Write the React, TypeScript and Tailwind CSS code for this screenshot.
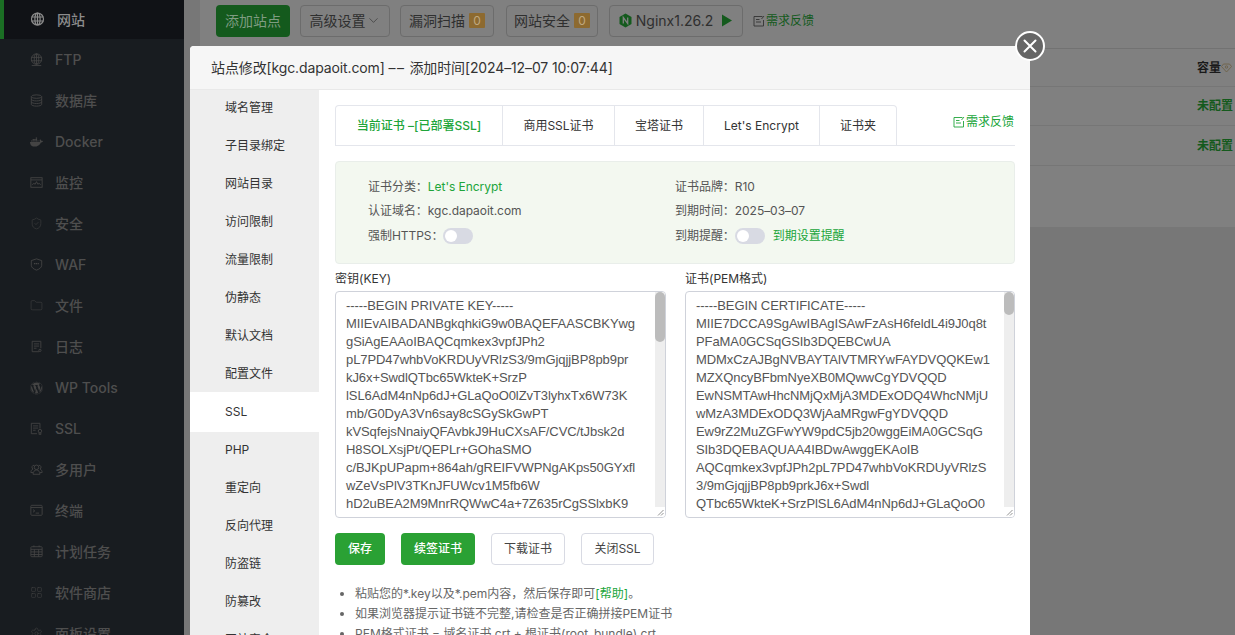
import { ShieldCheck, Folder, LayoutGrid, Settings, ChevronDown } from 'lucide-react'
import { FaWordpress, FaDocker } from 'react-icons/fa'
import type { ReactNode } from 'react'

const FONT = "font-['Inter','Noto_Sans_CJK_SC',sans-serif]"

// ─── Icons ───────────────────────────────────────────────────────────────────

function Svg({ children, sw = 1 }: { children: ReactNode; sw?: number }) {
  return (
    <svg width="15" height="15" viewBox="0 0 15 15" fill="none" stroke="currentColor" strokeWidth={sw}>
      {children}
    </svg>
  )
}

const globePaths = (
  <>
    <circle cx="7.500" cy="7" r="6" />
    <ellipse cx="7.500" cy="7" rx="2.600" ry="6" />
    <path d="M7.500 1v12M1.500 5h12M1.500 9h12" />
  </>
)

function FeedbackIcon() {
  return (
    <svg width="12" height="12" viewBox="0 0 12 12" fill="none" stroke="currentColor" strokeWidth="0.9">
      <path d="M9.500 1.500H1v9.500h9.500V5M3 4.500h3.500M3 7h5M8.500 4 11 1" />
    </svg>
  )
}

// ─── Data ────────────────────────────────────────────────────────────────────

const ic = { size: 15, strokeWidth: 1 }

const SIDE_ITEMS: { label: string; icon: ReactNode }[] = [
  { label: 'FTP', icon: <Svg>{globePaths}<path d="M2 14.500h11" /></Svg> },
  {
    label: '数据库',
    icon: (
      <Svg>
        <ellipse cx="7.500" cy="3" rx="6" ry="2" />
        <path d="M1.500 3v9c0 1.100 2.700 2 6 2s6-.9 6-2V3M1.500 6c0 1.100 2.700 2 6 2s6-.9 6-2M1.500 9c0 1.100 2.700 2 6 2s6-.9 6-2" />
      </Svg>
    ),
  },
  { label: 'Docker', icon: <FaDocker size={14} /> },
  {
    label: '监控',
    icon: (
      <Svg>
        <rect x="1" y="2" width="13" height="11" />
        <path d="M1 4.500h13M2.500 10l2-1.500 1.500 1 1.500-3 1.500 3 1.500-1 2 1.500" />
      </Svg>
    ),
  },
  { label: '安全', icon: <ShieldCheck {...ic} /> },
  {
    label: 'WAF',
    icon: (
      <Svg>
        <path d="M7.500 1 13.500 3v5.500c0 2.500-3 4.500-6 5.500-3-1-6-3-6-5.500V3z" />
        <path d="M4.500 6.500h6" strokeDasharray="1.500 .6" strokeWidth="1.500" />
      </Svg>
    ),
  },
  { label: '文件', icon: <Folder {...ic} /> },
  {
    label: '日志',
    icon: (
      <Svg>
        <path d="M10.500 13.500H2.500V1.500h10v8M4.500 4.500h6M4.500 7h6M4.500 9.500h3" />
        <circle cx="11.500" cy="12" r="1.300" />
      </Svg>
    ),
  },
  { label: 'WP Tools', icon: <FaWordpress size={14} /> },
  {
    label: 'SSL',
    icon: (
      <Svg>
        <path d="M8 13.500H1.500V1.500h10v6M3.500 4.500h6M3.500 7h6M3.500 9.500h3" />
        <circle cx="11.500" cy="10.500" r="2" />
        <path d="M10.500 12.500v2l1-.7 1 .7v-2" />
      </Svg>
    ),
  },
  {
    label: '多用户',
    icon: (
      <Svg>
        <circle cx="7.500" cy="5" r="2.600" />
        <path d="M5 2.700A2.300 2.300 0 0 0 3.500 7M10 2.700A2.300 2.300 0 0 1 11.500 7M3.500 7C2 7.500 1 9 1 11h2.500M11.500 7c1.500.5 2.500 2 2.500 4h-2.500M3.500 13c0-2.500 1.500-5 4-5s4 2.500 4 5z" />
      </Svg>
    ),
  },
  {
    label: '终端',
    icon: (
      <Svg>
        <rect x="1" y="1.500" width="13" height="11.500" rx="1" />
        <path d="M1 4h13M3.500 6.500l2 1.500-2 1.500M6.500 10.500h4" />
      </Svg>
    ),
  },
  {
    label: '计划任务',
    icon: (
      <Svg>
        <rect x="1" y="2" width="13" height="11.500" rx="1" />
        <path d="M4.500 .5v2M10.500 .5v2M1 5h13M1 8h13M1 11h13M5 5v8.500M10 5v8.500" />
      </Svg>
    ),
  },
  { label: '软件商店', icon: <LayoutGrid {...ic} /> },
  { label: '面板设置', icon: <Settings {...ic} /> },
]

const MODAL_NAV = ['域名管理', '子目录绑定', '网站目录', '访问限制', '流量限制', '伪静态', '默认文档', '配置文件', 'SSL', 'PHP', '重定向', '反向代理', '防盗链', '防篡改', '网站安全']

const KEY_LINES = [
  '-----BEGIN PRIVATE KEY-----',
  'MIIEvAIBADANBgkqhkiG9w0BAQEFAASCBKYwg',
  'gSiAgEAAoIBAQCqmkex3vpfJPh2',
  'pL7PD47whbVoKRDUyVRlzS3/9mGjqjjBP8pb9pr',
  'kJ6x+SwdlQTbc65WkteK+SrzP',
  'lSL6AdM4nNp6dJ+GLaQoO0lZvT3lyhxTx6W73K',
  'mb/G0DyA3Vn6say8cSGySkGwPT',
  'kVSqfejsNnaiyQFAvbkJ9HuCXsAF/CVC/tJbsk2d',
  'H8SOLXsjPt/QEPLr+GOhaSMO',
  'c/BJKpUPapm+864ah/gREIFVWPNgAKps50GYxfl',
  'wZeVsPlV3TKnJFUWcv1M5fb6W',
  'hD2uBEA2M9MnrRQWwC4a+7Z635rCgSSlxbK9',
  '3Ha0Hd2M9xhEZcbQwP4u6ZRLdD9',
]

const CERT_LINES = [
  '-----BEGIN CERTIFICATE-----',
  'MIIE7DCCA9SgAwIBAgISAwFzAsH6feldL4i9J0q8t',
  'PFaMA0GCSqGSIb3DQEBCwUA',
  'MDMxCzAJBgNVBAYTAlVTMRYwFAYDVQQKEw1',
  'MZXQncyBFbmNyeXB0MQwwCgYDVQQD',
  'EwNSMTAwHhcNMjQxMjA3MDExODQ4WhcNMjU',
  'wMzA3MDExODQ3WjAaMRgwFgYDVQQD',
  'Ew9rZ2MuZGFwYW9pdC5jb20wggEiMA0GCSqG',
  'SIb3DQEBAQUAA4IBDwAwggEKAoIB',
  'AQCqmkex3vpfJPh2pL7PD47whbVoKRDUyVRlzS',
  '3/9mGjqjjBP8pb9prkJ6x+Swdl',
  'QTbc65WkteK+SrzPlSL6AdM4nNp6dJ+GLaQoO0',
  'lZvT3lyhxTx6W73Kmb/G0DyA3Vn6say',
]

// ─── Sub-components ──────────────────────────────────────────────────────────

function TopButton({ w, children }: { w: string; children: ReactNode }) {
  return (
    <div className={`${w} h-8 flex items-center justify-center gap-1 rounded-[4px] border border-[#6c6c6c] text-[14px] text-[#2f2f2f] whitespace-nowrap`}>
      {children}
    </div>
  )
}

function ZeroTag() {
  return <span className="w-4 h-[15px] flex items-center justify-center bg-[#8d6a30] text-[#bfa77f] text-[12px] rounded-[1px]">0</span>
}

function Toggle() {
  return (
    <span className="inline-flex w-[30px] h-4 rounded-full bg-[#d8dae3] items-center pl-[2px]">
      <span className="w-[12px] h-[12px] rounded-full bg-white" />
    </span>
  )
}

function CodeBox({ lines, thumb }: { lines: string[]; thumb: string }) {
  return (
    <div className="relative h-[227px] rounded-[4px] border border-[#cfd2da] overflow-hidden">
      <div className="pl-[10px] pt-[5px] font-['Liberation_Sans','Noto_Sans_CJK_SC',sans-serif] text-[13px] tracking-[-0.08px] leading-[18px] text-[#555] whitespace-pre">
        {lines.map(l => (
          <div key={l}>{l}</div>
        ))}
      </div>
      <div className="absolute top-0 right-0 bottom-[10px] w-[10px] bg-[#eeeeee]">
        <div className={`w-[10px] rounded-full bg-[#bcbcbc] ${thumb}`} />
      </div>
      <div className="absolute right-0 bottom-0 w-[10px] h-[10px] bg-white">
        <svg width="10" height="10" viewBox="0 0 10 10" stroke="#777" strokeWidth="0.8">
          <path d="M3 8.500 8.500 3M6 8.500 8.500 6" />
        </svg>
      </div>
    </div>
  )
}

function Tab({ w, active, children }: { w: string; active?: boolean; children: ReactNode }) {
  return (
    <div className={`${w} h-[41px] flex items-center justify-center border-t border-r border-[#e4e6ec] first:border-l first:rounded-tl-[4px] last:rounded-tr-[4px] text-[12px] ${active ? 'text-[#20a53a] font-medium' : 'text-[#333] border-b'}`}>
      {children}
    </div>
  )
}

// ─── Main ────────────────────────────────────────────────────────────────────

export default function App() {
  return (
    <div className={`${FONT} relative w-[1235px] h-[635px] overflow-hidden flex bg-[#777777]`}>
      {/* 사이드바 */}
      <aside className="w-[184px] h-full shrink-0 bg-[#181c20] overflow-hidden">
        <div className="h-[39px] flex items-center gap-[12px] pl-[26px] bg-[#101216] border-l-[4px] border-[#1b6f24] text-[#8c8c8c] text-[14px] font-medium">
          <Svg sw={1.200}>{globePaths}</Svg>
          网站
        </div>
        {SIDE_ITEMS.map(it => (
          <div key={it.label} className="h-[41px] flex items-center gap-[12px] pl-[30px] text-[#4e4e4e] text-[14px] font-medium first:mt-px">
            <span className="w-[13px] flex justify-center text-[#444]">{it.icon}</span>
            {it.label}
          </div>
        ))}
      </aside>

      {/* 배경 페이지 */}
      <main className="flex-1 pl-[16px]">
        <div className="bg-[#808080] h-[227px]">
          <div className="h-[49px] pl-[16px] flex items-center border-b border-[#727272]">
            <div className="h-8 w-[74px] mr-[10px] flex items-center justify-center rounded-[4px] bg-[#145a1d] text-[#7f9c82] text-[14px] -mt-[7px]">添加站点</div>
            <div className="flex items-center -mt-[7px]">
              <TopButton w="w-[90px]">
                高级设置
                <ChevronDown size={15} strokeWidth={1} className="-ml-1" />
              </TopButton>
              <div className="w-[10px]" />
              <TopButton w="w-[94px]">
                漏洞扫描
                <ZeroTag />
              </TopButton>
              <div className="w-[12px]" />
              <TopButton w="w-[92px]">
                网站安全
                <ZeroTag />
              </TopButton>
              <div className="w-[11px]" />
              <TopButton w="w-[134px]">
                <svg width="13" height="15" viewBox="0 0 13 15">
                  <path d="M6.500 0.500 12.500 4v7l-6 3.500L0.500 11V4z" fill="#145a1d" />
                  <path d="M4.300 10.500v-6l4.400 6v-6" fill="none" stroke="#808080" strokeWidth="1.300" />
                </svg>
                Nginx1.26.2
                <svg width="12" height="13" viewBox="0 0 12 13" className="ml-1">
                  <path d="M1 0.500 11 6.500 1 12.500z" fill="#145a1d" />
                </svg>
              </TopButton>
              <div className="ml-[10px] flex items-center gap-[1px] text-[12px] text-[#145a1d]">
                <span className="text-[#333]">
                  <FeedbackIcon />
                </span>
                需求反馈
              </div>
            </div>
          </div>
          <div className="pl-[997px] h-[38px] flex items-center text-[12px] font-semibold text-[#1a1a1a] whitespace-nowrap border-b border-[#767676]">
            容量
            <svg width="11" height="10" viewBox="0 0 11 10" fill="none" stroke="#6f6248" strokeWidth="0.9" className="shrink-0">
              <path d="M2.500 1h6l2 2.500L5.500 9 .5 3.500z" />
              <circle cx="5.500" cy="4" r="1.200" />
            </svg>
          </div>
          <div className="pl-[997px] h-[39px] flex items-center text-[12px] font-semibold text-[#145a1d] whitespace-nowrap border-b border-[#767676]">未配置</div>
          <div className="pl-[997px] h-[40px] flex items-center text-[12px] font-semibold text-[#145a1d] whitespace-nowrap border-b border-[#767676]">未配置</div>
        </div>
      </main>

      {/* 모달 */}
      <div className="absolute left-[190px] top-[46px] w-[840px] h-[640px] bg-white rounded-t-[4px] flex flex-col">
        <div className="h-[44px] shrink-0 pl-[21px] flex items-center text-[14px] tracking-[-0.12px] text-[#333] bg-[#f6f6f6] border-b border-[#e9e9e9] rounded-t-[4px] whitespace-pre">
          站点修改[kgc.dapaoit.com] <span className="tracking-[1.500px]">––</span> 添加时间[2024–12–07 10:07:44]
        </div>
        <div className="flex flex-1 min-h-0">
          <nav className="w-[129px] shrink-0 bg-[#eeeeee] overflow-hidden">
            <div className="-mt-px">
              {MODAL_NAV.map(n => (
                <div key={n} className={`pl-[35px] flex items-center text-[12px] text-[#333] ${n === 'SSL' ? 'bg-white h-[40px] -my-px' : 'h-[38px]'}`}>
                  {n}
                </div>
              ))}
            </div>
          </nav>

          <div className="flex-1 pl-[16px] pr-[16px] pt-[15px] text-[12px] text-[#555]">
            {/* 탭 */}
            <div className="flex items-end border-b border-[#e4e6ec] h-[41px] justify-between">
              <div className="flex -mb-px">
                <Tab w="w-[168px]" active>当前证书 –[已部署SSL]</Tab>
                <Tab w="w-[112px]">商用SSL证书</Tab>
                <Tab w="w-[89px]">宝塔证书</Tab>
                <Tab w="w-[116px]">Let's Encrypt</Tab>
                <Tab w="w-[77px]">证书夹</Tab>
              </div>
              <div className="self-start mt-[8px] mr-px flex items-center gap-[1px] text-[#20a53a]">
                <FeedbackIcon />
                需求反馈
              </div>
            </div>

            {/* 인증서 정보 */}
            <div className="mt-[15px] h-[103px] bg-[#f3f8f0] border border-[#e9eeea] rounded-[4px] pl-[32px] pt-[12.500px] grid grid-cols-[307px_1fr] auto-rows-[24.500px] items-center tracking-[-0.04px]">
              <div>证书分类：<span className="text-[#20a53a]">Let's Encrypt</span></div>
              <div>证书品牌：R10</div>
              <div>认证域名：kgc.dapaoit.com</div>
              <div>到期时间：2025–03–07</div>
              <div className="flex items-center">强制HTTPS：<Toggle /></div>
              <div className="flex items-center">到期提醒：<Toggle /><span className="ml-[8px] text-[#20a53a]">到期设置提醒</span></div>
            </div>

            {/* 키 / 인증서 */}
            <div className="mt-[6px] grid grid-cols-[331px_330px] gap-x-[19px]">
              <div>
                <div className="h-[21px] pb-[4px] flex items-center text-[#333]">密钥(KEY)</div>
                <CodeBox lines={KEY_LINES} thumb="h-[50px]" />
              </div>
              <div>
                <div className="h-[21px] pb-[4px] flex items-center text-[#333]">证书(PEM格式)</div>
                <CodeBox lines={CERT_LINES} thumb="h-[23px]" />
              </div>
            </div>

            {/* 버튼 */}
            <div className="mt-[15px] flex gap-[16px]">
              <div className="w-[50px] h-8 flex items-center justify-center rounded-[4px] bg-[#2aa134] text-white font-medium">保存</div>
              <div className="w-[74px] h-8 flex items-center justify-center rounded-[4px] bg-[#2aa134] text-white font-medium">续签证书</div>
              <div className="w-[74px] h-8 flex items-center justify-center rounded-[4px] border border-[#d8dae3] text-[#444]">下载证书</div>
              <div className="w-[73px] h-8 flex items-center justify-center rounded-[4px] border border-[#d8dae3] text-[#444]">关闭SSL</div>
            </div>

            {/* 안내 */}
            <ul className="mt-[19px] pl-[20px] list-disc leading-[20px] text-[#666]">
              <li>粘贴您的*.key以及*.pem内容，然后保存即可<span className="text-[#20a53a]">[帮助]</span>。</li>
              <li>如果浏览器提示证书链不完整,请检查是否正确拼接PEM证书</li>
              <li>PEM格式证书 = 域名证书.crt + 根证书(root_bundle).crt</li>
            </ul>
          </div>
        </div>
      </div>

      {/* 닫기 */}
      <div className="absolute left-[1015px] top-[31px] w-[30px] h-[30px] rounded-full bg-[#666] border-[2px] border-white flex items-center justify-center">
        <svg width="14" height="14" viewBox="0 0 14 14" stroke="white" strokeWidth="2" strokeLinecap="round">
          <path d="M1.500 1.500 12.500 12.500M12.500 1.500 1.500 12.500" />
        </svg>
      </div>
    </div>
  )
}
